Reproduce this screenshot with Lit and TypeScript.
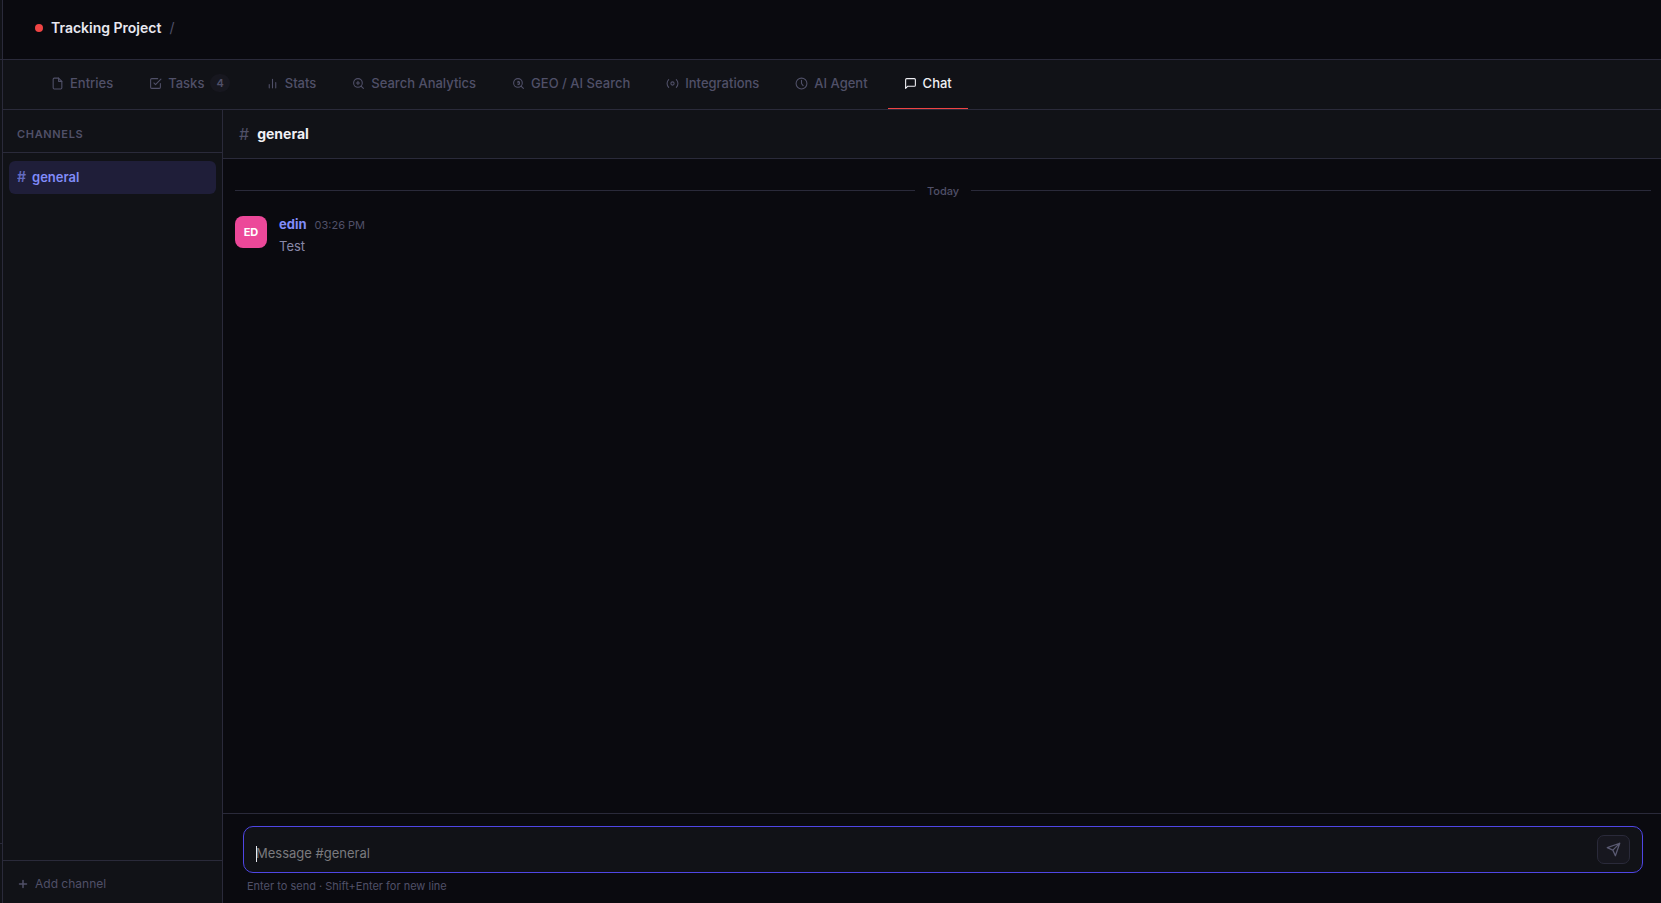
import { LitElement, html, css, svg } from "lit";
import { customElement, state } from "lit/decorators.js";
import { classMap } from "lit/directives/class-map.js";

const icons = {
  entries: svg`<path d="M14 2H6a2 2 0 0 0-2 2v16a2 2 0 0 0 2 2h12a2 2 0 0 0 2-2V8z"/><path d="M14 2v6h6"/>`,
  tasks: svg`<path d="M9 11l3 3L22 4"/><path d="M21 12v7a2 2 0 0 1-2 2H5a2 2 0 0 1-2-2V5a2 2 0 0 1 2-2h11"/>`,
  stats: svg`<path d="M18 20V10M12 20V4M6 20v-6"/>`,
  search: svg`<circle cx="11" cy="11" r="8"/><path d="M21 21l-4.35-4.35M11 8v6M8 11h6"/>`,
  geo: svg`<circle cx="11" cy="11" r="8"/><path d="M21 21l-4.35-4.35M11 8a3 3 0 0 1 0 6M11 8v3"/>`,
  integrations: svg`<circle cx="12" cy="12" r="3"/><path d="M19.07 4.93a10 10 0 0 1 0 14.14M4.93 4.93a10 10 0 0 0 0 14.14"/>`,
  agent: svg`<circle cx="12" cy="12" r="10"/><path d="M12 6v6l3 4"/>`,
  chat: svg`<path d="M21 15a2 2 0 0 1-2 2H7l-4 4V5a2 2 0 0 1 2-2h14a2 2 0 0 1 2 2z"/>`,
  send: svg`<path d="M22 2L11 13M22 2l-7 20-4-9-9-4z"/>`,
  plus: svg`<path d="M12 5v14M5 12h14"/>`,
};

type IconName = keyof typeof icons;

const icon = (name: IconName) =>
  html`<svg class="icon icon-${name}" viewBox="0 0 24 24" aria-hidden="true">${icons[name]}</svg>`;

interface Tab {
  icon: IconName;
  label: string;
  count?: number;
}

const tabs: Tab[] = [
  { icon: "entries", label: "Entries" },
  { icon: "tasks", label: "Tasks", count: 4 },
  { icon: "stats", label: "Stats" },
  { icon: "search", label: "Search Analytics" },
  { icon: "geo", label: "GEO / AI Search" },
  { icon: "integrations", label: "Integrations" },
  { icon: "agent", label: "AI Agent" },
  { icon: "chat", label: "Chat" },
];

@customElement("app-root")
export class AppRoot extends LitElement {
  @state() private active = "Chat";
  @state() private draft = "";

  static styles = css`
    :host {
      --bg: #0a0a0f;
      --panel: #111217;
      --raised: #17171f;
      --line: #2a2a3a;
      --muted: #505068;
      --accent: #818cf8;
      display: flex;
      height: 100vh;
      overflow: hidden;
      background: var(--bg);
      color: #e8e8f0;
      font: 13px/20px Inter, "Liberation Sans", sans-serif;
    }
    * { box-sizing: border-box; }
    button, textarea { font: inherit; color: inherit; margin: 0; padding: 0; border: 0; background: none; }
    button { cursor: pointer; }
    h1, h2, p { margin: 0; font: inherit; }
    .icon {
      width: 13px;
      height: 13px;
      flex: none;
      fill: none;
      stroke: currentColor;
      stroke-width: 2;
      stroke-linecap: round;
      stroke-linejoin: round;
    }
    .rail {
      flex: none;
      width: 3px;
      display: flex;
      flex-direction: column;
      justify-content: space-between;
      background: var(--panel);
      border-right: 1px solid var(--line);
    }
    .rail-top { height: 60px; border-bottom: 1px solid var(--line); }
    .rail-bottom { height: 60px; border-top: 1px solid var(--line); }
    .page { flex: 1; min-width: 0; display: flex; flex-direction: column; }
    .topbar {
      flex: none;
      height: 60px;
      padding: 0 32px 4px;
      display: flex;
      align-items: center;
      gap: 8px;
      border-bottom: 1px solid var(--line);
    }
    .dot { width: 8px; height: 8px; border-radius: 50%; background: #ef4444; }
    .project { font-size: 14px; font-weight: 600; }
    .slash { font-size: 14px; color: var(--muted); }
    .tabs {
      flex: none;
      height: 50px;
      padding: 0 32px;
      display: flex;
      gap: 4px;
      background: var(--panel);
      border-bottom: 1px solid var(--line);
    }
    .tab {
      display: flex;
      align-items: center;
      gap: 6px;
      padding: 0 16px 2px;
      color: var(--muted);
      font-weight: 500;
      white-space: nowrap;
      border-bottom: 1px solid transparent;
    }
    .tab.active { color: #f0f0f5; border-bottom-color: #ef4444; }
    .count {
      padding: 0 6px;
      border-radius: 9px;
      background: var(--raised);
      font-size: 11px;
      line-height: 18px;
      font-weight: 600;
      text-align: center;
    }
    .body { flex: 1; min-height: 0; display: flex; }
    .channels {
      flex: none;
      width: 220px;
      display: flex;
      flex-direction: column;
      background: var(--panel);
      border-right: 1px solid var(--line);
    }
    .channels-title {
      height: 43px;
      padding: 14px 14px 0;
      border-bottom: 1px solid var(--line);
      color: var(--muted);
      font-size: 11px;
      line-height: 20px;
      font-weight: 600;
      letter-spacing: 0.06em;
    }
    .channel-list { flex: 1; padding: 8px 6px; }
    .channel {
      width: 100%;
      height: 33px;
      padding: 0 8px 2px;
      display: flex;
      align-items: center;
      gap: 6px;
      border-radius: 6px;
      background: #1f1e39;
      color: var(--accent);
      font-weight: 600;
    }
    .channel .hash { font-size: 14px; opacity: 0.7; }
    .add {
      height: 43px;
      padding: 4px 14px 0;
      display: flex;
      align-items: center;
      gap: 6px;
      border-top: 1px solid var(--line);
      color: var(--muted);
      font-size: 12px;
    }
    .add .icon { stroke-width: 3; width: 12px; height: 12px; }
    .chat { flex: 1; min-width: 0; display: flex; flex-direction: column; }
    .chat-head {
      flex: none;
      height: 49px;
      padding: 0 16px;
      display: flex;
      align-items: center;
      gap: 8px;
      background: var(--panel);
      border-bottom: 1px solid var(--line);
      font-size: 14px;
    }
    .chat-head .hash { font-size: 16px; color: var(--muted); }
    .chat-head h2 { font-weight: 700; color: #f0f0f5; }
    .messages { flex: 1; min-height: 0; overflow: auto; padding: 22px 10px 0 12px; }
    .day {
      display: flex;
      align-items: center;
      gap: 12px;
      color: var(--muted);
      font-size: 11px;
      font-weight: 500;
    }
    .day::before, .day::after { content: ""; flex: 1; height: 1px; margin-bottom: 2px; background: var(--line); }
    .message { display: flex; gap: 12px; padding-top: 15px; }
    .avatar {
      flex: none;
      width: 32px;
      height: 32px;
      border-radius: 8px;
      background: #ec4899;
      color: #fff;
      font-size: 11px;
      line-height: 32px;
      font-weight: 700;
      text-align: center;
    }
    .meta { display: flex; align-items: baseline; gap: 8px; height: 20px; line-height: 16px; }
    .author { color: var(--accent); font-weight: 700; }
    .time { color: var(--muted); font-size: 11px; }
    .text { color: #8888a8; }
    .composer { flex: none; padding: 12px 18px 8px 20px; border-top: 1px solid var(--line); }
    .box {
      position: relative;
      height: 47px;
      padding: 0 12px;
      display: flex;
      align-items: center;
      gap: 8px;
      border: 1px solid #4f46e5;
      border-radius: 10px;
      background: var(--panel);
    }
    .input {
      flex: 1;
      min-width: 0;
      height: 29px;
      padding-top: 8px;
      resize: none;
      outline: none;
      overflow: hidden;
      color: #e8e8f0;
    }
    .input::placeholder { color: #7a7a7e; opacity: 1; }
    .caret {
      position: absolute;
      left: 12px;
      bottom: 10px;
      width: 1px;
      height: 16px;
      background: #e8e8f0;
      pointer-events: none;
    }
    .send {
      flex: none;
      width: 33px;
      height: 29px;
      display: grid;
      place-items: center;
      border: 1px solid var(--line);
      border-radius: 7px;
      background: var(--raised);
      color: #5a5a72;
    }
    .send .icon { width: 15px; height: 15px; }
    .hint { padding: 4px 4px 0; color: var(--muted); font-size: 11px; line-height: 18px; }
  `;

  firstUpdated() {
    this.renderRoot.querySelector("textarea")?.focus();
  }

  render() {
    return html`
      <div class="rail"><div class="rail-top"></div><div class="rail-bottom"></div></div>
      <div class="page">
        <header class="topbar">
          <span class="dot"></span>
          <h1 class="project">Tracking Project</h1>
          <span class="slash">/</span>
        </header>
        <nav class="tabs" aria-label="Project sections">
          ${tabs.map(
            (t) => html`<button
              class=${classMap({ tab: true, active: t.label === this.active })}
              @click=${() => (this.active = t.label)}
            >${icon(t.icon)}<span>${t.label}</span>${t.count ? html`<span class="count">${t.count}</span>` : ""}</button>`
          )}
        </nav>
        <div class="body">
          <aside class="channels">
            <h2 class="channels-title">CHANNELS</h2>
            <div class="channel-list">
              <button class="channel"><span class="hash">#</span><span>general</span></button>
            </div>
            <button class="add">${icon("plus")}<span>Add channel</span></button>
          </aside>
          <main class="chat">
            <div class="chat-head"><span class="hash">#</span><h2>general</h2></div>
            <div class="messages">
              <div class="day">Today</div>
              <article class="message">
                <div class="avatar">ED</div>
                <div>
                  <div class="meta"><span class="author">edin</span><time class="time">03:26 PM</time></div>
                  <p class="text">Test</p>
                </div>
              </article>
            </div>
            <div class="composer">
              <div class="box">
                <textarea
                  class="input"
                  rows="1"
                  aria-label="Message #general"
                  placeholder="Message #general"
                  .value=${this.draft}
                  @input=${(e: Event) => (this.draft = (e.target as HTMLTextAreaElement).value)}
                ></textarea>
                ${this.draft ? "" : html`<span class="caret"></span>`}
                <button class="send" aria-label="Send">${icon("send")}</button>
              </div>
              <p class="hint">Enter to send · Shift+Enter for new line</p>
            </div>
          </main>
        </div>
      </div>
    `;
  }
}
